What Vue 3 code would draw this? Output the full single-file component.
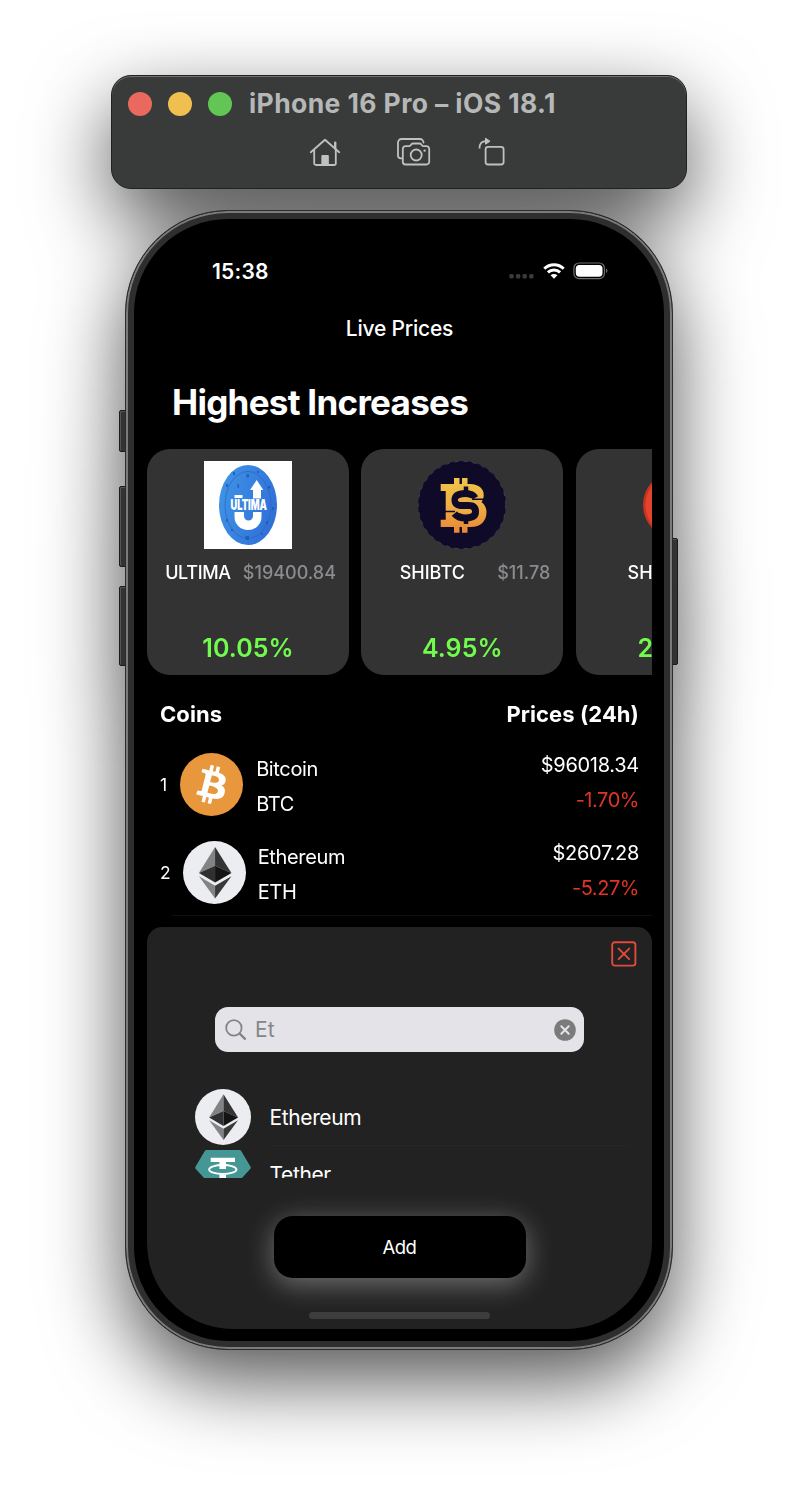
<script setup>
import { h } from 'vue'

const gainers = [
  { name: 'ULTIMA', price: '$19400.84', change: '10.05%', logo: 'ultima' },
  { name: 'SHIBTC', price: '$11.78', change: '4.95%', logo: 'shibtc' },
  { name: 'SH', price: '', change: '2', logo: 'red', cut: true },
]

const coins = [
  { rank: 1, name: 'Bitcoin', symbol: 'BTC', price: '$96018.34', change: '-1.70%' },
  { rank: 2, name: 'Ethereum', symbol: 'ETH', price: '$2607.28', change: '-5.27%' },
]

const EthLogo = () =>
  h('svg', { viewBox: '0 0 32 32', width: '100%', height: '100%' }, [
    h('circle', { cx: 16, cy: 16, r: 16, fill: '#ecedf0' }),
    h('path', { d: 'M16.3 3 8.1 16.3l8.2-3.7z', fill: '#828384' }),
    h('path', { d: 'M16.3 3l8.3 13.3-8.3-3.7z', fill: '#343434' }),
    h('path', { d: 'M16.3 12.6v8.5l-8.2-4.8z', fill: '#2f3030' }),
    h('path', { d: 'M16.3 12.6v8.5l8.3-4.8z', fill: '#141414' }),
    h('path', { d: 'M8.1 17.9l8.2 4.8v6.5z', fill: '#828384' }),
    h('path', { d: 'M24.6 17.9l-8.3 4.8v6.5z', fill: '#393939' }),
  ])
</script>

<template>
  <div class="desktop">
    <div class="toolbar">
      <div class="title-row">
        <i class="light red"></i><i class="light yellow"></i><i class="light green"></i>
        <span class="title">iPhone 16 Pro – iOS 18.1</span>
      </div>
      <div class="tools">
        <svg class="home" width="32" height="30" viewBox="0 0 32 30" fill="none" stroke="#bfc0bf" stroke-width="1.8" stroke-linecap="round" stroke-linejoin="round">
          <path d="M1.8 15.3 16 2.8l14.2 12.5" />
          <path d="M5.2 13v13.2a1.8 1.8 0 0 0 1.8 1.8h18a1.8 1.8 0 0 0 1.8-1.8V13" />
          <path d="M26.2 5.6v6" stroke-width="2.4" />
          <path d="M12.9 27.5v-9h6.4v9z" fill="#bfc0bf" stroke-width="1" />
        </svg>
        <svg class="camera" width="34" height="30" viewBox="0 0 34 30" fill="none" stroke="#bfc0bf" stroke-width="1.8" stroke-linecap="round" stroke-linejoin="round">
          <path d="M4.6 21.3H3.9A2.9 2.9 0 0 1 1 18.4V5.5A3.5 3.5 0 0 1 4.5 2H23a3.5 3.5 0 0 1 3.5 3.5" />
          <path d="M8.5 9.2h3.300c1 0 1.500-.5 2-1.300.6-.9 1.200-1.400 2.200-1.400h6.500c1 0 1.600.5 2.200 1.400.5.8 1 1.300 2 1.300h2.800a2.700 2.700 0 0 1 2.700 2.700v12.900a2.700 2.700 0 0 1-2.700 2.700h-21a2.700 2.700 0 0 1-2.700-2.700V11.900a2.700 2.700 0 0 1 2.700-2.700z" />
          <circle cx="19.200" cy="18" r="5.500" />
          <circle cx="27.600" cy="13.600" r="1.200" fill="#bfc0bf" stroke="none" />
        </svg>
        <svg class="rotate" width="28" height="30" viewBox="0 0 28 30" fill="none" stroke="#bfc0bf" stroke-width="1.800">
          <rect x="7.600" y="9.900" width="18" height="17.600" rx="2.500" />
          <path d="M1.500 11.500C1.500 6.500 3.800 4.200 8 4.200" />
          <path d="M7.500 1.200 12 4.200 7.500 7.200z" fill="#bfc0bf" stroke-width="1" stroke-linejoin="round" />
        </svg>
      </div>
    </div>

    <div class="device">
      <i class="key action"></i><i class="key up"></i><i class="key down"></i><i class="key power"></i>
      <div class="phone">
        <div class="status">
          <span class="time">15:38</span>
          <svg class="signal" width="26" height="6" viewBox="0 0 26 6" fill="#3b3b3b">
            <rect x="0.300" y="1" width="4.400" height="4.400" rx="1.500" /><rect x="6.900" y="1" width="4.400" height="4.400" rx="1.500" />
            <rect x="13.500" y="1" width="4.400" height="4.400" rx="1.500" /><rect x="20.100" y="1" width="4.400" height="4.400" rx="1.500" />
          </svg>
          <svg class="wifi" width="22" height="16" viewBox="0 0 22 16" fill="none" stroke="#fff" stroke-width="3">
            <path d="M1.300 5.700a13.800 13.800 0 0 1 19.400 0" />
            <path d="M4.900 9.400a8.700 8.700 0 0 1 12.200 0" />
            <path d="M11 15.800 7.600 12.300a4.900 4.900 0 0 1 6.800 0z" fill="#fff" stroke="none" />
          </svg>
          <svg class="battery" width="35" height="18" viewBox="0 0 35 18">
            <rect x="0.900" y="1" width="30.500" height="15.600" rx="5" fill="none" stroke="#6e6e6e" stroke-width="1.200" />
            <rect x="2.800" y="2.900" width="26.700" height="11.800" rx="3.600" fill="#fff" />
            <path d="M33 6.600a2.400 2.400 0 0 1 0 4.400z" fill="#6e6e6e" />
          </svg>
        </div>

        <div class="nav">Live Prices</div>
        <h1>Highest Increases</h1>

        <div class="cards">
          <div v-for="g in gainers" :key="g.name" class="card" :class="{ cut: g.cut }">
            <svg v-if="g.logo === 'ultima'" class="logo" viewBox="0 0 88 88">
              <defs>
                <linearGradient id="ub" x1="0" x2="1" y1="0.300" y2="0.700"><stop offset="0" stop-color="#3f93e6" /><stop offset="1" stop-color="#2f6ed6" /></linearGradient>
              </defs>
              <rect width="88" height="88" fill="#fff" />
              <ellipse cx="44" cy="44" rx="29" ry="40" fill="url(#ub)" />
              <ellipse cx="44" cy="44" rx="23" ry="33.500" fill="none" stroke="#2a62bd" stroke-width="0.900" opacity="0.700" />
              <g fill="#1d55b5" opacity="0.750">
                <rect x="42.500" y="13" width="2.500" height="3.500" /><rect x="29" y="11" width="2" height="3" /><rect x="33.500" y="23" width="1.500" height="4" />
                <rect x="22" y="23" width="2" height="3" /><rect x="64" y="25" width="2.500" height="2.500" /><rect x="41.500" y="75" width="3.500" height="4" />
                <rect x="62" y="60" width="2" height="3" /><rect x="22" y="58" width="1.500" height="3" /><rect x="53" y="10" width="2" height="2" />
                <rect x="68" y="46" width="2" height="3" /><rect x="27" y="68" width="2" height="2" /><rect x="57" y="72" width="2" height="2" />
              </g>
              <path d="M30.500 34h8v3h-8zM49 37.500V29h-3l6.700-10 6.600 10H57v8.500z" fill="#fff" />
              <path d="M30.500 51H40v4a4.500 4.500 0 0 0 9 0v-4h8.500v5a13.500 13 0 0 1-27 0z" fill="#fff" />
              <text x="26.500" y="49" textLength="36.500" lengthAdjust="spacingAndGlyphs" font-family="Inter, sans-serif" font-size="14" font-weight="900" fill="#fff">ULTIMA</text>
            </svg>
            <svg v-else-if="g.logo === 'shibtc'" class="logo" viewBox="0 0 88 88">
              <defs>
                <linearGradient id="sg" x1="0" x2="0" y1="17" y2="72" gradientUnits="userSpaceOnUse"><stop offset="0" stop-color="#efc64a" /><stop offset="0.500" stop-color="#edb044" /><stop offset="1" stop-color="#ea8436" /></linearGradient>
              </defs>
              <circle cx="44" cy="44" r="44" fill="#0f0a28" />
              <circle cx="44" cy="44" r="43.700" fill="none" stroke="#5c5a6c" stroke-width="0.600" stroke-dasharray="4 5" />
              <path fill="url(#sg)" d="M36 17h5.500v6H44v-6h5.500v6H52c9 0 14 5 13.700 11 0 3-.7 5-2.200 7 3.200 2.500 5 6 5 10 0 9-6 15-15.500 15h-3.500v5.700H44V66h-2.500v5.700H36V66H22.700v-7.300h5V30h-5v-7H36z" />
              <path d="M48 25.500v8M48 56v7" stroke="#0f0a28" stroke-width="4.500" />
              <path d="M57 37Q54.500 32.500 47.500 32.500 37 32.500 37 39 37 44.600 45 44.600h5q7.500 0 7.500 6.200 0 6.200-10 6.200-7.500 0-11-4.500" fill="none" stroke="#0f0a28" stroke-width="7" />
              <path d="M41.500 39h12M41 50h11" stroke="#edb044" stroke-width="3.400" stroke-linecap="round" />
              <path d="M54 38.200h14M24 50.500h13" stroke="#0f0a28" stroke-width="1.500" />
            </svg>
            <svg v-else class="logo" viewBox="0 0 88 88">
              <circle cx="44" cy="44" r="34" fill="#c93420" /><circle cx="44" cy="44" r="31.500" fill="#e2452c" />
            </svg>
            <div class="labels"><span class="name">{{ g.name }}</span><span class="price">{{ g.price }}</span></div>
            <div class="change">{{ g.change }}</div>
          </div>
        </div>

        <div class="head"><span>Coins</span><span>Prices (24h)</span></div>

        <div v-for="c in coins" :key="c.rank" class="coin">
          <span class="rank">{{ c.rank }}</span>
          <div class="coin-logo">
            <svg v-if="c.rank === 1" viewBox="0 0 32 32" width="100%" height="100%">
              <circle cx="16" cy="16" r="16" fill="#e8973d" />
              <path fill="#fff" d="M23.189 14.020c.314-2.096-1.283-3.223-3.465-3.975l.708-2.840-1.728-.430-.690 2.765c-.454-.114-.920-.220-1.385-.326l.695-2.783L15.596 6l-.708 2.839c-.376-.086-.746-.170-1.104-.260l.002-.009-2.384-.595-.460 1.846s1.283.294 1.256.312c.700.175.826.638.805 1.006l-.806 3.235c.048.012.110.030.180.057l-.183-.045-1.130 4.532c-.086.212-.303.531-.793.410.018.025-1.256-.313-1.256-.313l-.858 1.978 2.250.561c.418.105.828.215 1.231.318l-.715 2.872 1.727.430.708-2.840c.472.127.930.245 1.378.357l-.706 2.828 1.728.430.715-2.866c2.948.558 5.164.333 6.097-2.333.752-2.146-.037-3.385-1.588-4.192 1.130-.260 1.980-1.003 2.207-2.538zm-3.950 5.538c-.533 2.147-4.148.986-5.320.695l.950-3.805c1.172.293 4.929.872 4.370 3.110zm.535-5.569c-.487 1.953-3.495.960-4.470.717l.860-3.450c.975.243 4.118.696 3.610 2.733z" />
            </svg>
            <EthLogo v-else />
          </div>
          <div class="names"><span>{{ c.name }}</span><span>{{ c.symbol }}</span></div>
          <div class="values"><span>{{ c.price }}</span><span class="down-pct">{{ c.change }}</span></div>
        </div>
        <div class="rule"></div>

        <div class="sheet">
          <svg class="close" width="26" height="26" viewBox="0 0 26 26" fill="none" stroke="#e34a3b" stroke-width="1.900" stroke-linecap="round">
            <rect x="1.200" y="1.200" width="23.200" height="23.400" rx="2.600" /><path d="M7.600 7.600l10.600 10.600M18.200 7.600 7.600 18.200" />
          </svg>
          <div class="search">
            <svg width="22" height="22" viewBox="0 0 22 22" fill="none" stroke="#858587" stroke-linecap="round">
              <circle cx="8.900" cy="8.900" r="7.700" stroke-width="1.800" /><path d="M14.700 14.700l5.300 5.100" stroke-width="2.300" />
            </svg>
            <span>Et</span>
            <svg class="clear" width="22" height="22" viewBox="0 0 22 22">
              <circle cx="11" cy="11" r="10.800" fill="#7b7b7c" /><path d="M7.300 7.300l7.400 7.400M14.700 7.300l-7.400 7.400" stroke="#e4e3e8" stroke-width="2" stroke-linecap="round" />
            </svg>
          </div>
          <div class="results">
            <div class="result">
              <div class="result-logo"><EthLogo /></div>
              <span>Ethereum</span>
            </div>
            <div class="result">
              <div class="result-logo">
                <svg width="56" height="48" viewBox="0 0 56 48">
                  <path d="M11.500 0h33a2 2 0 0 1 1.700 1L55.400 16.600a2.200 2.200 0 0 1-.2 2.500L29.300 47a1.800 1.800 0 0 1-2.600 0L.8 19.100a2.200 2.200 0 0 1-.2-2.500L9.800 1a2 2 0 0 1 1.700-1z" fill="#459796" />
                  <path d="M15.700 7.700H40v4.300h-9v7h-6.600v-7h-8.700zM24.400 24.500H31v8h-6.600z" fill="#fff" />
                  <ellipse cx="27.800" cy="19.500" rx="13.700" ry="4.500" fill="none" stroke="#fff" stroke-width="1.800" />
                </svg>
              </div>
              <span class="tether">Tether</span>
            </div>
          </div>
          <button class="add">Add</button>
          <div class="indicator"></div>
        </div>
      </div>
    </div>
  </div>
</template>

<style>
body { background: #fff; }
</style>

<style scoped>
* { box-sizing: border-box; }
.desktop {
  width: 798px; height: 1500px; overflow: hidden; padding-top: 75px;
  display: flex; flex-direction: column; align-items: center;
  font-family: Inter, "Liberation Sans", sans-serif; color: #fff;
  filter: drop-shadow(0 30px 40px rgba(0, 0, 0, 0.680));
}
.toolbar {
  width: 576px; height: 114px; flex: none; border-radius: 20px; background: #393b3a;
  border: 1px solid #202120; box-shadow: inset 0 1px 0 #707271; margin-bottom: 21px;
}
.title-row { display: flex; align-items: center; height: 30px; margin-top: 13px; padding-left: 16px; }
.light { width: 24px; height: 24px; flex: none; border-radius: 50%; margin-right: 16px; }
.red { background: #e9695f; }
.yellow { background: #f1bf50; }
.green { background: #62c655; }
.title { font-size: 26.500px; font-weight: 700; line-height: 30px; letter-spacing: 0.400px; color: #b6b8b7; margin: -2px 0 0 1px; white-space: nowrap; }
.tools { display: flex; margin: 18px 0 0 197px; height: 32px; }
.camera { margin-left: 56px; }
.rotate { margin-left: 47px; }

.device { position: relative; width: 548px; height: 1140px; flex: none; }
.key { position: absolute; width: 9px; background: #333; border: 1px solid #1b1b1b; border-radius: 2px; box-shadow: inset 1px 1px 0 #555; }
.action { left: -6px; top: 200px; height: 42px; }
.up { left: -6px; top: 276px; height: 81px; }
.down { left: -6px; top: 376px; height: 80px; }
.power { right: -5px; top: 328px; height: 127px; }
.phone {
  position: relative; width: 548px; height: 1140px; background: #000; border-radius: 103px;
  border: 1px solid #2c2c2c; padding: 39px 20px 20px 21px; overflow: hidden;
  box-shadow: inset 0 0 0 2px #7b7b7b, inset 0 0 0 8px #2e2e2e;
}
.status { height: 42px; display: flex; align-items: center; padding-left: 65px; }
.time { font-size: 21px; font-weight: 600; letter-spacing: 0.200px; line-height: 42px; width: 297px; margin-top: 2px; }
.signal { margin-top: 10px; }
.wifi { margin-left: 8px; }
.battery { margin-left: 8px; }
.nav { height: 73px; line-height: 73px; text-align: center; font-size: 21px; font-weight: 500; letter-spacing: -0.220px; }
h1 { margin: 0; padding-left: 25px; height: 75px; line-height: 75px; font-size: 35px; font-weight: 700; letter-spacing: -0.720px; white-space: nowrap; }
.cards { display: flex; gap: 12.300px; margin-top: 9px; overflow: hidden; }
.card { width: 202px; height: 226px; flex: none; border-radius: 23px; background: #333; padding-top: 12px; text-align: center; }
.logo { width: 88px; height: 88px; display: block; margin: 0 auto; }
.labels { display: flex; height: 24px; line-height: 24px; margin-top: 12px; padding: 0 13px 0 6px; font-size: 18px; font-weight: 500; }
.name { flex: 1; }
.card:first-child .name { letter-spacing: -0.350px; }
.price { color: #8b8b90; }
.change { margin-top: 47px; line-height: 32px; font-size: 25px; font-weight: 600; letter-spacing: 0.050px; color: #70fb4d; }
.cut .name { text-align: left; padding-left: 46px; }
.cut .change { text-align: left; padding-left: 62px; }

.head { display: flex; justify-content: space-between; height: 65px; padding: 12px 13px 0; line-height: 54px; font-size: 22px; font-weight: 700; letter-spacing: 0.080px; }
.coin { display: flex; align-items: center; height: 88px; padding: 0 13px; font-size: 20px; }
.rank { font-size: 17.500px; line-height: 24px; margin-top: 2px; }
.coin-logo { width: 63px; height: 63px; margin: 0 13px 0 13px; }
.coin + .coin .coin-logo { margin: 0 12px 0 12px; }
.names, .values { display: flex; flex-direction: column; line-height: 34.500px; letter-spacing: -0.350px; margin-top: 5px; }
.values { margin-left: auto; text-align: right; margin-top: -3px; letter-spacing: -0.280px; }
.down-pct { color: #e03426; letter-spacing: -0.450px; }
.rule { height: 1px; margin: -1px 0 11px 25px; background: #0e0e0e; }

.sheet { height: 402px; background: #222; border-radius: 15px 15px 86px 86px; padding-top: 14px; overflow: hidden; }
.close { display: block; margin: 0 15px 0 auto; }
.search { display: flex; align-items: center; width: 369px; height: 45px; margin: 40px 0 0 68px; padding: 0 8px 0 10px; border-radius: 13px; background: #e4e3e8; color: #858587; font-size: 21px; }
.search span { margin-left: 8px; letter-spacing: 0.200px; }
.clear { margin-left: auto; }
.results { height: 89px; margin: 37px 0 0 48px; overflow: hidden; }
.result { display: flex; align-items: center; height: 56px; font-size: 21px; letter-spacing: -0.380px; }
.result > span { margin-top: 1px; }
.result + .result { border-top: 1px solid; border-image: linear-gradient(90deg, transparent 76px, #262626 76px 434px, transparent 434px) 1; }
.result-logo { width: 56px; display: flex; margin-right: 18.500px; }
.add {
  display: block; width: 252px; height: 62px; margin: 37.500px auto 0; padding-top: 2px; border: 0; border-radius: 19px; background: #000; color: #fff;
  font-family: inherit; font-size: 18.500px; letter-spacing: -0.500px; box-shadow: 0 6px 28px rgba(255, 255, 255, 0.360);
}
.indicator { width: 181px; height: 7px; margin: 34.500px auto 0; border-radius: 4px; background: #3d3d3d; position: relative; }
</style>
